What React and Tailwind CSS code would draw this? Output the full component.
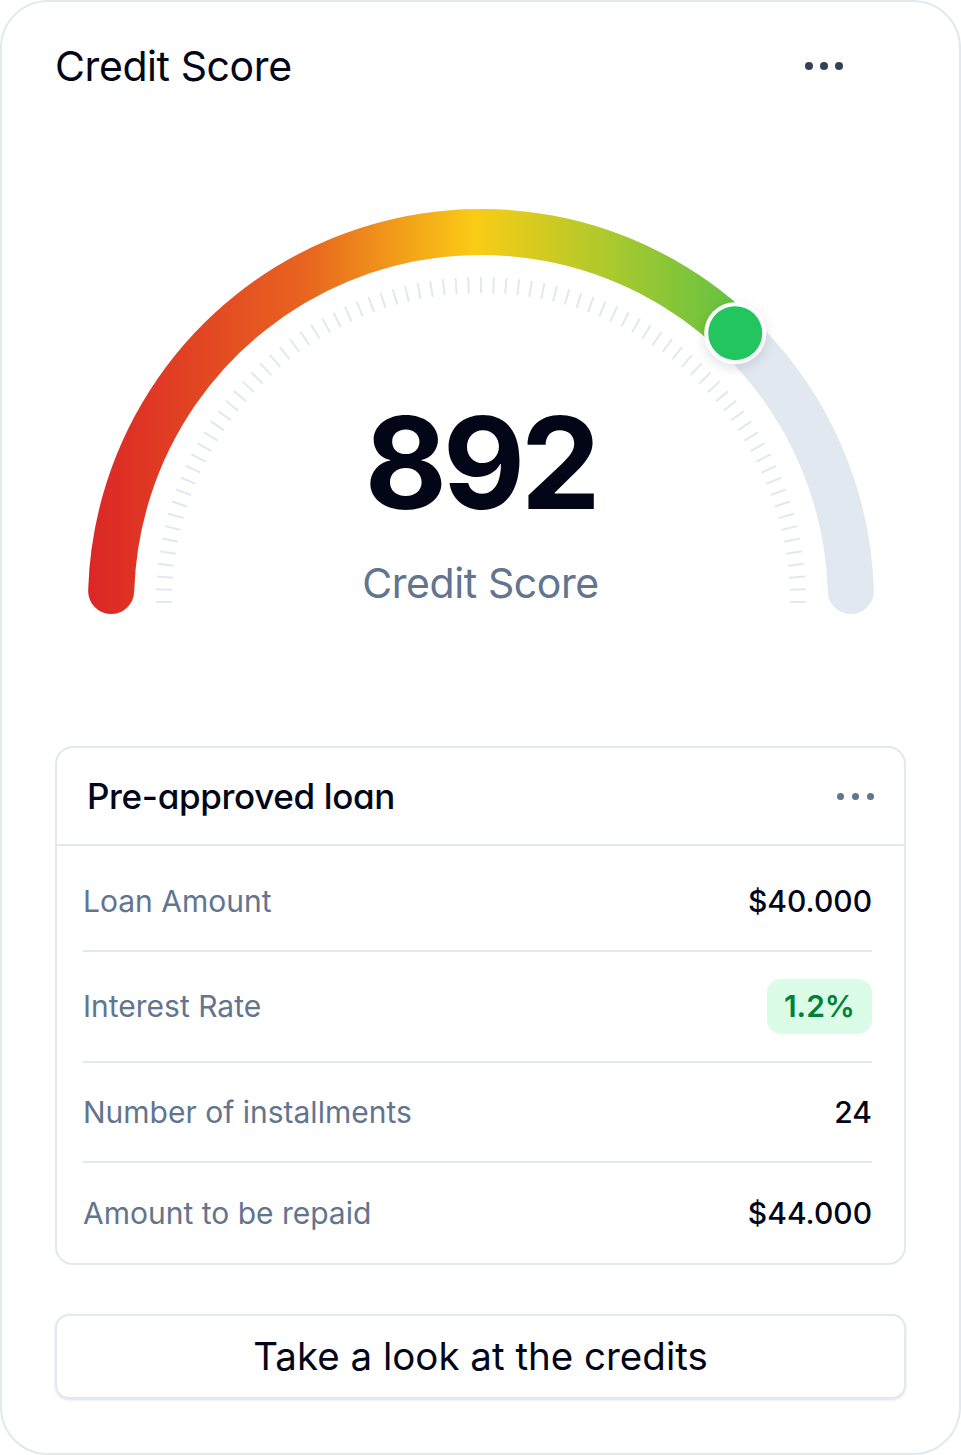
import React from 'react';

const CX = 426;
const CY = 410;
const R = 370;
const START = 178.3; // arc starts a touch above the horizontal
const END = 1.7;
const SCORE_ANGLE = 46.6; // degrees from the right end

function polar(r, deg) {
  const a = (deg * Math.PI) / 180;
  return [CX + r * Math.cos(a), CY - r * Math.sin(a)];
}

function Gauge() {
  const ticks = [];
  for (let i = 0; i <= 80; i++) {
    const deg = 180 - i * 2.25;
    const [x1, y1] = polar(309, deg);
    const [x2, y2] = polar(325, deg);
    ticks.push(<line key={i} x1={x1} y1={y1} x2={x2} y2={y2} stroke="#e2e8f0" strokeWidth="2" />);
  }
  const [sx, sy] = polar(R, START);
  const [tx, ty] = polar(R, END);
  const [ex, ey] = polar(R, SCORE_ANGLE);

  return (
    <svg width="851" height="440" viewBox="0 0 851 440" className="block">
      <defs>
        <linearGradient id="scoreGrad" gradientUnits="userSpaceOnUse" x1="33" y1="0" x2="690" y2="0">
          <stop offset="0" stopColor="#dc2626" />
          <stop offset="0.33" stopColor="#e8641f" />
          <stop offset="0.59" stopColor="#facc15" />
          <stop offset="0.8" stopColor="#a9c92e" />
          <stop offset="1" stopColor="#5ec143" />
        </linearGradient>
        <filter id="dotShadow" x="-50%" y="-50%" width="200%" height="200%">
          <feDropShadow dx="0" dy="4" stdDeviation="6" floodColor="#0f172a" floodOpacity="0.12" />
        </filter>
      </defs>
      {ticks}
      <path
        d={`M ${sx} ${sy} A ${R} ${R} 0 0 1 ${tx} ${ty}`}
        fill="none"
        stroke="#e2e8f0"
        strokeWidth="46"
        strokeLinecap="round"
      />
      <path
        d={`M ${sx} ${sy} A ${R} ${R} 0 0 1 ${ex} ${ey}`}
        fill="none"
        stroke="url(#scoreGrad)"
        strokeWidth="46"
        strokeLinecap="round"
      />
      <circle cx={ex} cy={ey} r="31" fill="#ffffff" filter="url(#dotShadow)" />
      <circle cx={ex} cy={ey} r="27" fill="#22c55e" />
    </svg>
  );
}

function Dots({ color, size, gap }) {
  return (
    <div className={`flex items-center ${gap}`}>
      <span className={`${size} rounded-full ${color}`} />
      <span className={`${size} rounded-full ${color}`} />
      <span className={`${size} rounded-full ${color}`} />
    </div>
  );
}

function Row({ label, children, last }) {
  return (
    <div className={`flex items-center justify-between h-[100px] ${last ? '' : 'border-b-2 border-slate-200'}`}>
      <span className="text-[30px] text-slate-500">{label}</span>
      {children}
    </div>
  );
}

export default function App() {
  return (
    <div className="w-[961px] h-[1455px] bg-white font-['Inter',sans-serif] text-slate-950">
      <div className="h-full border-2 border-slate-200 rounded-[48px] px-[53px] pt-[38px]">
        {/* Header */}
        <div className="flex items-center justify-between h-[52px]">
          <h1 className="text-[41px] leading-none tracking-[-0.01em] text-[#020617]">Credit Score</h1>
          <div className="mr-[63px]">
            <Dots color="bg-slate-700" size="w-[8px] h-[8px]" gap="gap-[7px]" />
          </div>
        </div>

        {/* Gauge */}
        <div className="relative mt-[100px]">
          <Gauge />
          <div className="absolute left-0 right-0 top-[208px] flex flex-col items-center">
            <div className="text-[127px] leading-none font-bold tracking-[-0.035em] text-[#020617]">892</div>
            <div className="mt-[36px] text-[41px] leading-none text-slate-500 tracking-[-0.01em]">Credit Score</div>
          </div>
        </div>

        {/* Loan card */}
        <div className="mt-[114px] border-2 border-slate-200 rounded-[18px]">
          <div className="flex items-center justify-between h-[98px] px-[30px] border-b-2 border-slate-200">
            <h2 className="text-[35px] font-medium tracking-[-0.01em] [font-feature-settings:'cv11']">Pre-approved loan</h2>
            <Dots color="bg-slate-500" size="w-[7px] h-[7px]" gap="gap-[8px]" />
          </div>
          <div className="ml-[26px] mr-[32px] pt-[6px]">
            <Row label="Loan Amount">
              <span className="text-[30px] font-medium">$40.000</span>
            </Row>
            <div className="flex items-center justify-between h-[111px] border-b-2 border-slate-200">
              <span className="text-[30px] text-slate-500">Interest Rate</span>
              <span className="h-[55px] px-[17px] flex items-center rounded-[14px] bg-green-100 text-green-700 text-[30px] font-semibold">
                1.2%
              </span>
            </div>
            <Row label="Number of installments">
              <span className="text-[30px] font-medium">24</span>
            </Row>
            <Row label="Amount to be repaid" last>
              <span className="text-[30px] font-medium">$44.000</span>
            </Row>
          </div>
        </div>

        {/* Button */}
        <button className="mt-[49px] w-full h-[85px] border-2 border-slate-200 rounded-[14px] shadow-sm text-[38.5px] text-slate-950 flex items-center justify-center">
          Take a look at the credits
        </button>
      </div>
    </div>
  );
}
